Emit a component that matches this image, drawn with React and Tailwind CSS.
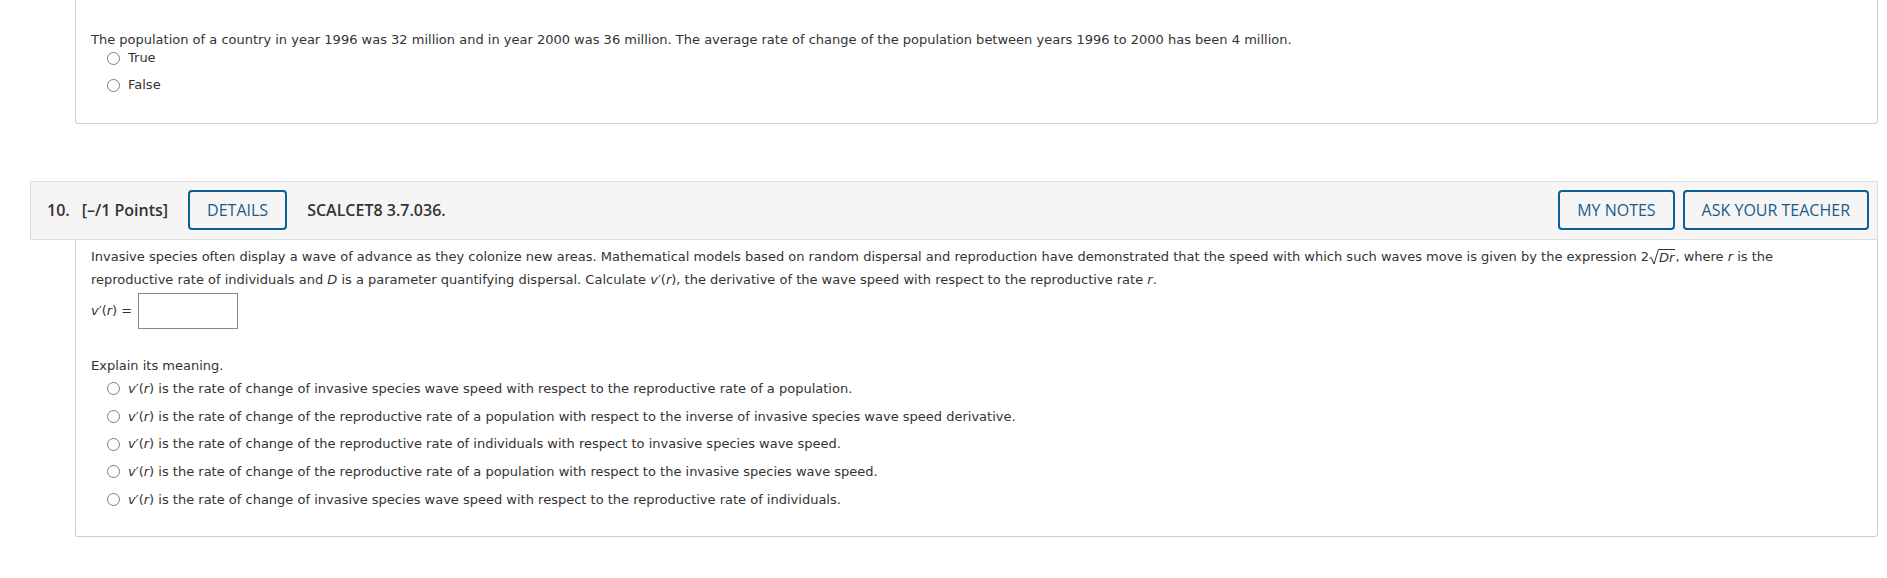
import React from "react";

const body = { fontFamily: '"DejaVu Sans", Verdana, sans-serif' };
const head = { fontFamily: '"Open Sans", "Liberation Sans", sans-serif' };

function Radio() {
  return (
    <span className="inline-block w-[13px] h-[13px] rounded-full border border-[#7d7d7d] bg-white shrink-0" />
  );
}

function VR() {
  return (
    <span>
      <i>v</i>′(<i>r</i>)
    </span>
  );
}

function Option({ children }) {
  return (
    <div className="flex items-center h-[22px] pl-[16px]">
      <Radio />
      <span className="ml-[8px] whitespace-nowrap">{children}</span>
    </div>
  );
}

function Btn({ children }) {
  return (
    <button
      className="h-[40px] px-[17px] border-2 border-[#0b5f94] rounded-[4px] text-[16px] text-[#1a5b8a] bg-transparent leading-none"
      style={head}
    >
      {children}
    </button>
  );
}

function Sqrt() {
  return (
    <span className="inline-flex items-start align-middle relative top-[-1px]">
      <svg width="10" height="16" viewBox="0 0 10 16" className="shrink-0">
        <path d="M0.5 9.5 L2.3 8.6 L5 15 L9.4 0.5 L10 0.5" fill="none" stroke="#333" strokeWidth="1" />
      </svg>
      <span className="border-t border-[#333] leading-[15px] pr-[1px]">
        <i>Dr</i>
      </span>
    </span>
  );
}

export default function App() {
  return (
    <div className="w-[1887px] h-[578px] bg-white text-[#333] text-[13px]" style={body}>
      <div className="ml-[30px] w-[1848px]">
        {/* Previous question card */}
        <div className="ml-[45px] border-x border-b border-[#cfcfcf] rounded-b-[3px] pl-[15px] pt-[33px] pb-[27px]">
          <div className="h-[14px] leading-[14px] whitespace-nowrap">
            The population of a country in year 1996 was 32 million and in year 2000 was 36 million. The average rate of change of the population between years 1996 to 2000 has been 4 million.
          </div>
          <div className="flex flex-col gap-[5px]">
            <Option>True</Option>
            <Option>False</Option>
          </div>
        </div>

        {/* Question 10 */}
        <div className="mt-[57px]">
          <div
            className="flex items-center border border-[#dcdcdc] bg-[#f5f5f5] pl-[16px] pr-[8px] pt-[8px] pb-[9px] text-[#333]"
            style={head}
          >
            <span className="text-[16px] font-semibold">10.</span>
            <span className="ml-[12px] text-[16px] font-semibold">[–/1 Points]</span>
            <span className="ml-[20px]">
              <Btn>DETAILS</Btn>
            </span>
            <span className="ml-[20px] text-[16px] font-semibold">SCALCET8 3.7.036.</span>
            <div className="ml-auto flex gap-[8px]">
              <Btn>MY NOTES</Btn>
              <Btn>ASK YOUR TEACHER</Btn>
            </div>
          </div>
          <div className="ml-[45px] border-x border-b border-[#cfcfcf] rounded-b-[3px] pl-[15px] pt-[5px] pb-[25px]">
            <div className="leading-[23px] whitespace-nowrap">
              Invasive species often display a wave of advance as they colonize new areas. Mathematical models based on random dispersal and reproduction have demonstrated that the speed with which such waves move is given by the expression 2<Sqrt />, where <i>r</i> is the
              <br />
              reproductive rate of individuals and <i>D</i> is a parameter quantifying dispersal. Calculate <VR />, the derivative of the wave speed with respect to the reproductive rate <i>r</i>.
            </div>
            <div className="flex items-center mt-[2px] h-[36px]">
              <span className="whitespace-nowrap">
                <VR /> =
              </span>
              <input
                type="text"
                className="ml-[6px] w-[100px] h-[36px] border border-[#8a8a8a] bg-white outline-none"
              />
            </div>
            <div className="mt-[30px] h-[14px] leading-[14px]">Explain its meaning.</div>
            <div className="mt-[4.5px] flex flex-col gap-[5.8px]">
              <Option>
                <VR /> is the rate of change of invasive species wave speed with respect to the reproductive rate of a population.
              </Option>
              <Option>
                <VR /> is the rate of change of the reproductive rate of a population with respect to the inverse of invasive species wave speed derivative.
              </Option>
              <Option>
                <VR /> is the rate of change of the reproductive rate of individuals with respect to invasive species wave speed.
              </Option>
              <Option>
                <VR /> is the rate of change of the reproductive rate of a population with respect to the invasive species wave speed.
              </Option>
              <Option>
                <VR /> is the rate of change of invasive species wave speed with respect to the reproductive rate of individuals.
              </Option>
            </div>
          </div>
        </div>
      </div>
    </div>
  );
}
